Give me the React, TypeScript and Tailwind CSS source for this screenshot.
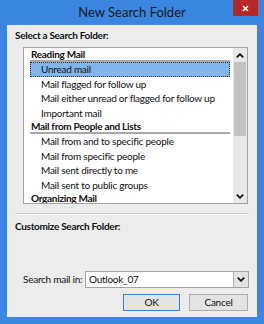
import React from "react";

const groups = [
  { title: "Reading Mail", items: ["Unread mail", "Mail flagged for follow up", "Mail either unread or flagged for follow up", "Important mail"] },
  { title: "Mail from People and Lists", items: ["Mail from and to specific people", "Mail from specific people", "Mail sent directly to me", "Mail sent to public groups"] },
  { title: "Organizing Mail", items: [] as string[] },
];

function Chevron({ up }: { up?: boolean }) {
  return (
    <svg width="8" height="5" viewBox="0 0 8 5" className={up ? "" : "rotate-180"}>
      <path d="M0.8 4.3 L4 1.2 L7.2 4.3" fill="none" stroke="#111" strokeWidth="1.8" />
    </svg>
  );
}

export default function App() {
  return (
    <div className="w-[264px] h-[324px] bg-[#3b86e0] flex flex-col font-['Lato',sans-serif] text-[#111]">
      {/* title bar */}
      <div className="relative h-[25px] flex items-center justify-center">
        <span className="text-[13px] text-[#1a1a1a]">New Search Folder</span>
        <div className="absolute right-[6px] top-0 w-[25px] h-[16px] bg-[#b8262a] flex items-center justify-center">
          <svg width="7" height="7" viewBox="0 0 7 7">
            <path d="M1 1 L6 6 M6 1 L1 6" stroke="#fff" strokeWidth="1.6" />
          </svg>
        </div>
      </div>

      {/* client area */}
      <div className="mx-[7px] mb-[7px] flex-1 bg-[#ececec] flex flex-col px-[8px] text-[10px] tracking-[-0.25px]">
        <div className="mt-[3px] h-[14px] leading-[14px] font-bold tracking-[-0.3px]">Select a Search Folder:</div>

        <div className="mt-[5px] ml-[8px] w-[225px] h-[157px] border border-[#a3a3a3] bg-white flex">
          <div className="flex-1 pl-[6px] pr-[3px] overflow-hidden">
            {groups.map((g) => (
              <div key={g.title}>
                <div className="h-[14.4px] leading-[13px] font-bold tracking-[-0.3px] pl-[1px] border-b-2 border-[#a8a8a8]">{g.title}</div>
                {g.items.map((it, i) => (
                  <div
                    key={it}
                    className={
                      g.title === "Reading Mail" && i === 0
                        ? "h-[14.4px] leading-[12.4px] pl-[10px] bg-[#80b4ea] border border-dotted border-[#333]"
                        : "h-[14.4px] leading-[14.4px] pl-[11px] whitespace-nowrap"
                    }
                  >
                    {it}
                  </div>
                ))}
              </div>
            ))}
          </div>
          <div className="w-[14px] bg-[#e8e8e8] flex flex-col">
            <div className="h-[14px] flex items-center justify-center">
              <Chevron up />
            </div>
            <div className="h-[74px] mx-[1px] bg-[#c2c2c2]" />
            <div className="flex-1" />
            <div className="h-[14px] flex items-center justify-center">
              <Chevron />
            </div>
          </div>
        </div>

        <div className="mt-[9px] border-t border-[#c9c9c9] border-b border-b-white" />
        <div className="mt-[4px] h-[14px] leading-[14px] font-bold tracking-[-0.3px]">Customize Search Folder:</div>

        <div className="flex-1" />

        <div className="h-[17px] flex items-center pl-[8px]">
          <span className="w-[62px]">Search mail in:</span>
          <div className="flex-1 h-[17px] border border-[#a3a3a3] bg-white flex items-center">
            <span className="flex-1 pl-[3px]">Outlook_07</span>
            <div className="w-[15px] h-[15px] bg-[#e3e3e3] border-l border-[#b0b0b0] flex items-center justify-center">
              <Chevron />
            </div>
          </div>
        </div>

        <div className="mt-[6px] mb-[6px] h-[17px] flex justify-end gap-[9px] pr-[1px]">
          <div className="w-[57px] h-[17px] bg-[#e3e3e3] border border-[#3c7fd1] flex items-center justify-center">OK</div>
          <div className="w-[59px] h-[17px] bg-[#e3e3e3] border border-[#adadad] flex items-center justify-center">Cancel</div>
        </div>
      </div>
    </div>
  );
}
